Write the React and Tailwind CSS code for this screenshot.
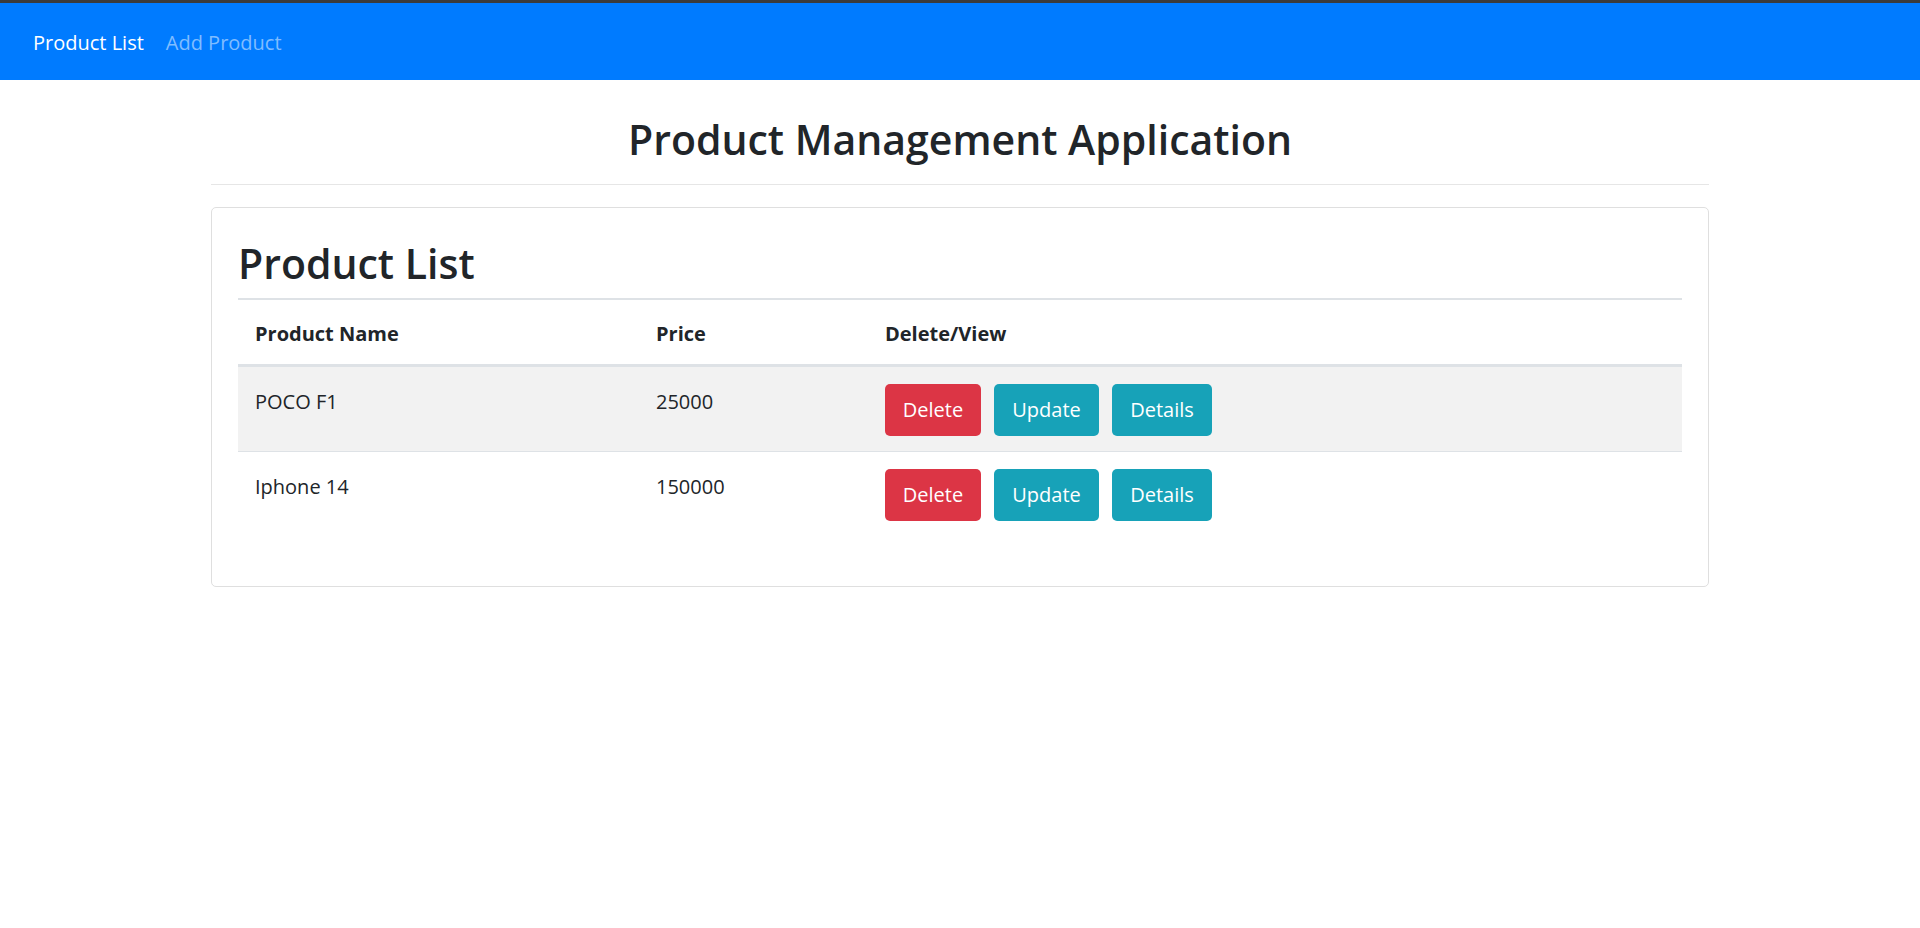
import React from "react";

const products = [
  { id: 1, name: "POCO F1", price: 25000 },
  { id: 2, name: "Iphone 14", price: 150000 },
];

export default function App() {
  return (
    <div
      className="min-h-screen bg-white text-[#212529]"
      style={{ fontFamily: '"Open Sans", "Noto Sans", sans-serif' }}
    >
      <div className="h-[3px] bg-[#3b3b3b]" />
      <nav className="h-[77px] bg-[#007bff] flex items-center px-[33px] pt-[2px] gap-[22px] text-[20px]">
        <a className="text-white">Product List</a>
        <a className="text-[#80bdff]">Add Product</a>
      </nav>

      <div className="w-[1498px] mx-auto">
        <h1 className="mt-[33px] text-center text-[41px] leading-[53px] font-semibold">
          Product Management Application
        </h1>
        <hr className="mt-[18px] border-0 border-t border-[#e6e6e6]" />

        <div className="mt-[22px] border border-[#dfdfdf] rounded-[5px] px-[26px] pt-[30px] pb-[49px]">
          <h2 className="text-[41px] leading-[50px] font-semibold mb-[10px]">Product List</h2>
          <table className="w-full border-collapse text-[20px]">
            <thead>
              <tr className="border-t-2 border-[#dee2e6]">
                <th className="w-[403px] h-[66px] pt-[5px] text-left font-bold pl-[17px] border-b-[3px] border-[#dee2e6]">
                  Product Name
                </th>
                <th className="w-[229px] pt-[5px] text-left font-bold pl-[15px] border-b-[3px] border-[#dee2e6]">
                  Price
                </th>
                <th className="pt-[5px] text-left font-bold pl-[15px] border-b-[3px] border-[#dee2e6]">
                  Delete/View
                </th>
              </tr>
            </thead>
            <tbody>
              {products.map((p, i) => (
                <tr
                  key={p.id}
                  className={
                    i % 2 === 0
                      ? "bg-[#f2f2f2] border-b border-[#dee2e6]"
                      : "bg-white"
                  }
                >
                  <td className="h-[86px] align-top pl-[17px] pt-[20px] leading-[30px]">
                    {p.name}
                  </td>
                  <td className="align-top pl-[15px] pt-[20px] leading-[30px]">{p.price}</td>
                  <td className="align-top pl-[15px] pt-[17px]">
                    <div className="flex gap-[13px]">
                      <button className="w-[96px] h-[52px] rounded-[5px] bg-[#dc3545] text-white">
                        Delete
                      </button>
                      <button className="w-[105px] h-[52px] rounded-[5px] bg-[#17a2b8] text-white">
                        Update
                      </button>
                      <button className="w-[100px] h-[52px] rounded-[5px] bg-[#17a2b8] text-white">
                        Details
                      </button>
                    </div>
                  </td>
                </tr>
              ))}
            </tbody>
          </table>
        </div>
      </div>
    </div>
  );
}
